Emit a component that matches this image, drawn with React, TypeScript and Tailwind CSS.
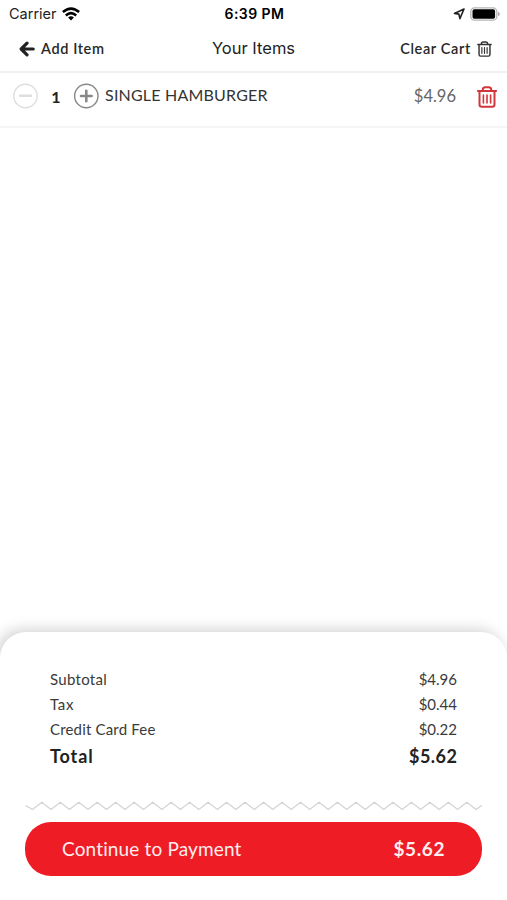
interface CartItem {
  id: string
  name: string
  quantity: number
  price: string
}

const items: CartItem[] = [
  { id: 'single-hamburger', name: 'SINGLE HAMBURGER', quantity: 1, price: '$4.96' }
]

const summary = [
  { label: 'Subtotal', value: '$4.96', spacing: 'tracking-[0.3px]' },
  { label: 'Tax', value: '$0.44', spacing: 'tracking-[0.7px]' },
  { label: 'Credit Card Fee', value: '$0.22', spacing: 'tracking-[0.18px]' }
]

// 25 teeth across the width of the sheet
const zigzag =
  'M0.5 4.5 L7.5 8.5 ' +
  Array.from({ length: 24 }, (_, i) => {
    const peak = 16.8 + i * 18.48
    return `L${peak} 1.2 L${peak + 9.24} 8.5`
  }).join(' ') +
  ' L457 4.2'

const TrashIcon = ({ className }: { className: string }) => (
  <svg viewBox="0 0 20 22" fill="none" stroke="currentColor" className={className}>
    <path d="M0.9 4.9H19.1" strokeWidth="2" strokeLinecap="round" />
    <path d="M5.7 4.7V4Q5.7 1.3 8.3 1.3H11.7Q14.3 1.3 14.3 4V4.7" strokeWidth="2" />
    <path d="M2.5 5.3V18.6Q2.5 20.8 4.7 20.8H15.3Q17.5 20.8 17.5 18.6V5.3" strokeWidth="2" />
    <path d="M6.4 9V17M10 9V17M13.6 9V17" strokeWidth="1.6" strokeLinecap="round" />
  </svg>
)

const StatusBar = () => (
  <div className="grid h-7 shrink-0 grid-cols-3 items-center pl-[9px] pr-[7px] font-['Inter',sans-serif] text-[14.5px] text-[#222]">
    <div className="flex items-center gap-[5px]">
      <span>Carrier</span>
      <svg viewBox="0 0 18 14" className="-mt-px h-[14px] w-[18px]" fill="none" stroke="#000" strokeWidth="2.6">
        <path d="M0.9 5.1Q9 -2 17.1 5.1" />
        <path d="M3.8 8.4Q9 4 14.2 8.4" />
        <path d="M9 13.4L6.1 10.5Q9 8.2 11.9 10.5Z" fill="#000" stroke="none" />
      </svg>
    </div>
    <span className="-mt-px text-center text-[14px] font-semibold tracking-[0.45px] text-black">6:39 PM</span>
    <div className="-mt-px flex items-center justify-end gap-[5px]">
      <svg viewBox="0 0 12 12" className="h-3 w-3" fill="none" stroke="#222" strokeWidth="1.6" strokeLinejoin="round">
        <path d="M11 1L1.5 5.4L5.9 6.1L6.9 10.6Z" />
      </svg>
      <svg viewBox="0 0 30 14" className="h-[14px] w-[30px]">
        <rect x="0.8" y="0.8" width="26" height="12.4" rx="3.8" fill="#fff" stroke="#b5b5b5" strokeWidth="1.3" />
        <rect x="2.5" y="2.3" width="22.6" height="9.4" rx="1.8" fill="#000" />
        <path d="M28 4.8Q29.8 5.6 29.8 7T28 9.2Z" fill="#a8a8a8" />
      </svg>
    </div>
  </div>
)

const Header = () => (
  <header className="grid h-[45px] shrink-0 grid-cols-[1fr_auto_1fr] items-center border-b-2 border-[#f1f1f1] pb-px pl-[19px] pr-[15px] text-[14.5px] font-semibold text-[#282828]">
    <button className="flex items-center gap-[6px]">
      <svg viewBox="0 0 16 16" className="h-4 w-4" fill="none" stroke="#222" strokeWidth="3.2" strokeLinecap="round" strokeLinejoin="round">
        <path d="M8 2.2L2.2 8L8 13.8M2.8 8H14.2" />
      </svg>
      <span className="tracking-[0.6px]">Add Item</span>
    </button>
    <h1 className="mr-1 pb-px font-['Inter',sans-serif] text-[16.5px] font-normal text-[#222]">Your Items</h1>
    <button className="flex items-center justify-end gap-[6px]">
      <span className="tracking-[0.65px]">Clear Cart</span>
      <TrashIcon className="h-4 w-[15px] text-[#333]" />
    </button>
  </header>
)

const ItemRow = ({ item }: { item: CartItem }) => (
  <div className="flex h-[55px] shrink-0 items-start border-b-2 border-[#f6f6f6] pl-[13px] pr-[10px] pt-[10px]">
    <button className="text-[#dedede]">
      <svg viewBox="0 0 26 26" className="h-[26px] w-[26px]" fill="none" stroke="currentColor">
        <circle cx="12.5" cy="13" r="11.7" strokeWidth="1.4" />
        <path d="M7 12.7H18" strokeWidth="2.4" strokeLinecap="round" />
      </svg>
    </button>
    <span className="w-[34px] text-center text-[16px] font-bold leading-[27px] text-[#222]">{item.quantity}</span>
    <button className="text-[#888]">
      <svg viewBox="0 0 26 26" className="h-[26px] w-[26px]" fill="none" stroke="currentColor">
        <circle cx="13.3" cy="13" r="11.7" strokeWidth="1.4" />
        <path d="M8 13H18.6M13.3 7.7V18.3" strokeWidth="2.6" strokeLinecap="round" />
      </svg>
    </button>
    <span className="ml-[6px] grow text-[16px] leading-6 tracking-[0.2px] text-[#333]">{item.name}</span>
    <span className="mr-[21px] mt-px text-[16.5px] leading-6 text-[#666]">{item.price}</span>
    <button className="mt-[3px]">
      <TrashIcon className="h-[22px] w-5 text-[#d2353b]" />
    </button>
  </div>
)

const App = () => {
  return (
    <div className="flex h-[900px] w-full flex-col overflow-hidden bg-white font-['Lato',sans-serif]">
      <StatusBar />
      <Header />
      <main className="grow">
        {items.map((item) => (
          <ItemRow key={item.id} item={item} />
        ))}
      </main>

      {/* Order summary sheet */}
      <section className="flex h-[268px] shrink-0 flex-col rounded-t-[26px] bg-white px-[25px] shadow-[-4px_-3px_14px_rgba(0,0,0,0.17)]">
        <div className="px-[25px] pt-[35px] text-[#3a3a3a]">
          {summary.map((line) => (
            <div key={line.label} className="flex h-[25px] items-center justify-between text-[15px]">
              <span className={line.spacing}>{line.label}</span>
              <span>{line.value}</span>
            </div>
          ))}
          <div className="flex h-[29px] items-center justify-between text-[18px] font-bold text-[#222]">
            <span className="tracking-[0.9px]">Total</span>
            <span className="-mr-[0.5px] tracking-[0.5px]">{'$5.62'}</span>
          </div>
        </div>
        <svg viewBox="0 0 457 10" className="mt-[30px] h-[10px] w-[457px]" fill="none" stroke="#d3d3d3" strokeWidth="1.2">
          <path d={zigzag} />
        </svg>
        <button className="mt-[11px] flex h-[54px] w-full items-center justify-between rounded-[26px] bg-[#ee1c25] pl-[37px] pr-[37px] text-[19px] text-[#ffeeee]">
          <span className="tracking-[0.15px]">Continue to Payment</span>
          <span className="font-bold tracking-[0.6px]">{'$5.62'}</span>
        </button>
      </section>
    </div>
  )
}

export default App
